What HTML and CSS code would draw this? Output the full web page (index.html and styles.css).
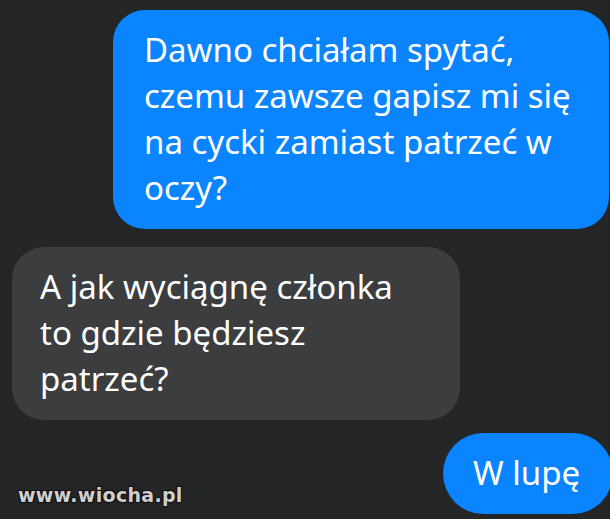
FILE: index.html
```html
<!DOCTYPE html>
<html lang="pl">
<head>
  <meta charset="UTF-8">
  <title>Czat</title>
  <link rel="stylesheet" href="styles.css">
</head>
<body>
  <div class="chat">
    <div class="msg sent first">Dawno chciałam spytać, czemu zawsze gapisz mi się na cycki zamiast patrzeć w oczy?</div>
    <div class="msg received">A jak wyciągnę członka to gdzie będziesz patrzeć?</div>
    <div class="msg sent last">W lupę</div>
  </div>
  <div class="watermark">www.wiocha.pl</div>
</body>
</html>
```

FILE: styles.css
```css
html, body {
  margin: 0;
  height: 100%;
}
body {
  background: #242526;
  font-family: "Noto Sans", "Open Sans", sans-serif;
  color: #fff;
  overflow: hidden;
  position: relative;
}
.chat {
  display: flex;
  flex-direction: column;
  padding-top: 10px;
}
.msg {
  font-size: 33px;
  line-height: 46px;
  padding: 17px 30px 18px 30px;
  box-sizing: border-box;
  border-radius: 32px;
}
.sent {
  background: #0a84ff;
}
.first {
  margin-left: 113px;
  width: 496px;
  padding-left: 31px;
}
.received {
  background: #3c3d3f;
  margin-left: 12px;
  margin-top: 18px;
  width: 448px;
  padding-left: 28px;
}
.last {
  margin-top: 13px;
  margin-left: 443px;
  width: 170px;
  border-radius: 41px;
}
.watermark {
  position: absolute;
  left: 18px;
  top: 484px;
  font-family: "DejaVu Sans", sans-serif;
  font-weight: bold;
  font-size: 19px;
  letter-spacing: 0.3px;
  color: #cfcfcf;
  text-shadow: 1px 1px 0 #111, -1px -1px 0 #111, 1px -1px 0 #111, -1px 1px 0 #111;
}
```
